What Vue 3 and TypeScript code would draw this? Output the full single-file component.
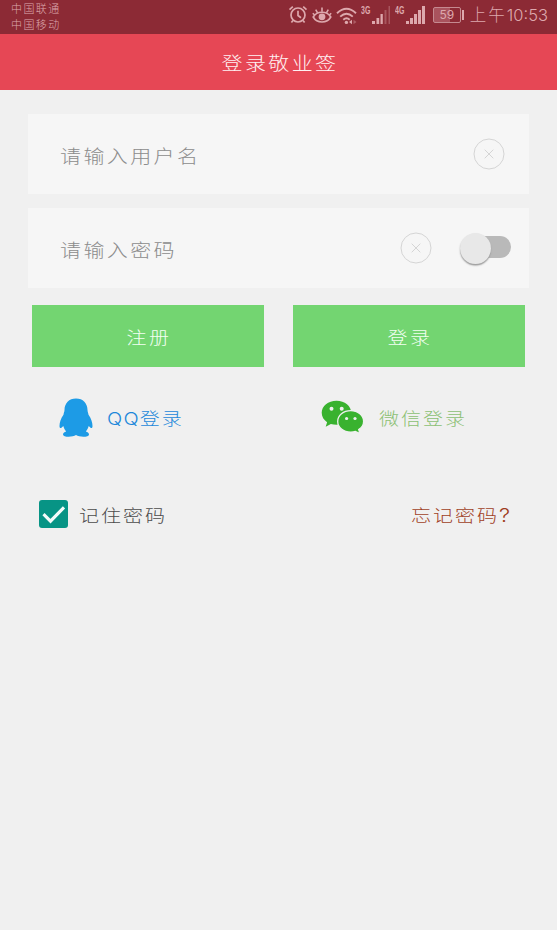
<script setup lang="ts">
import { ref } from 'vue'

const username = ref('')
const password = ref('')
const showPassword = ref(false)
const remember = ref(true)
</script>

<template>
  <div class="screen">
    <div class="status">
      <div class="carriers">
        <span>中国联通</span>
        <span>中国移动</span>
      </div>
      <div class="tray">
        <svg class="alarm" width="20" height="20" viewBox="0 0 20 20" fill="none" stroke="currentColor" stroke-width="1.7">
          <circle cx="10" cy="10" r="7" />
          <path d="M10 5.800v4.700l3 2.200M1.500 4.600 4.800 1.700M18.500 4.600 15.200 1.700M5 15.500l-1.600 2M15 15.500l1.600 2" />
        </svg>
        <svg class="eye" width="20" height="18" viewBox="0 0 20 18" fill="none" stroke="currentColor" stroke-width="1.6">
          <path d="M1.200 11C5 4.600 15 4.600 18.800 11 15 17.700 5 17.700 1.200 11Z" />
          <circle cx="10" cy="10.800" r="3.400" fill="currentColor" stroke="none" />
          <path d="M10 5.800V1.500M5.600 6.800 3.700 3.600M14.400 6.800 16.300 3.600M2.600 9 .8 7.200M17.400 9l1.800-1.800" />
        </svg>
        <svg class="wifi" width="22" height="18" viewBox="0 0 22 18" fill="none" stroke="currentColor" stroke-width="1.9">
          <path d="M1 6.200Q10.500-2.600 20 6.200M4.200 9.600q6.300-5.800 12.600 0M7.300 12.700q3.200-2.700 6.400 0" />
          <circle cx="10.400" cy="15.400" r="1.700" fill="currentColor" stroke="none" />
          <path d="m13 15 3-2.200v4.400z" fill="currentColor" stroke="none" />
          <path d="m20.500 15-3-2.200v4.400z" fill="currentColor" stroke="none" opacity=".4" />
        </svg>
        <span class="net"><b>3G</b></span>
        <svg class="bars" width="20" height="18" viewBox="0 0 20 18" fill="currentColor">
          <path d="M0 15h3v3H0zM4.500 12h2.700v6H4.500zM8.500 8h2.300v10H8.500z" />
          <path d="M12.500 4h2v14h-2zM16.500 0h1.500v18h-1.500z" opacity=".35" />
        </svg>
        <span class="net net-4g"><b>4G</b></span>
        <svg class="bars" width="20" height="18" viewBox="0 0 20 18" fill="currentColor">
          <path d="M0 15h3v3H0zM4 12h3v6H4zM8 8h3v10H8zM12 4h3v14h-3zM16 0h3v18h-3z" />
        </svg>
        <span class="battery"><b>59</b></span>
        <span class="time"><em>上午</em>10:53</span>
      </div>
    </div>

    <header class="title"><h1 class="script">登录敬业签</h1></header>

    <main class="form">
      <div class="field">
        <input v-model="username" class="script" type="text" placeholder="请输入用户名" />
        <button class="clear clear-user" type="button" aria-label="清除" @click="username = ''">
          <svg width="32" height="32" viewBox="0 0 32 32" fill="none" stroke="currentColor">
            <circle cx="16" cy="16" r="15" /><path d="m11.700 11.700 8.600 8.600M20.300 11.700l-8.600 8.600" />
          </svg>
        </button>
      </div>
      <div class="field">
        <input v-model="password" class="script" :type="showPassword ? 'text' : 'password'" placeholder="请输入密码" />
        <button class="clear" type="button" aria-label="清除" @click="password = ''">
          <svg width="32" height="32" viewBox="0 0 32 32" fill="none" stroke="currentColor">
            <circle cx="16" cy="16" r="15" /><path d="m11.700 11.700 8.600 8.600M20.300 11.700l-8.600 8.600" />
          </svg>
        </button>
        <button class="toggle" :class="{ on: showPassword }" type="button" aria-label="显示密码" @click="showPassword = !showPassword">
          <i class="thumb"></i>
        </button>
      </div>

      <div class="actions">
        <button type="button"><span class="script">注册</span></button>
        <button type="button"><span class="script">登录</span></button>
      </div>

      <div class="social">
        <a class="qq">
          <svg width="34" height="39" viewBox="0 0 34 39" fill="#1d9be6">
            <path d="M17 .5C10 .5 5.500 5.300 5.500 12c0 2-.8 2.700-1 4.800C1.800 20.500.500 24.500.500 28c0 2.500 1.200 2.400 2.200 1.400L4.300 28c.6 2.200 1.500 3.900 2.900 5.400-2 .6-3.200 1.700-3.200 3 0 3 9.500 3 13 .6 3.500 2.400 13 2.400 13-.6 0-1.300-1.200-2.400-3.200-3 1.400-1.500 2.300-3.200 2.900-5.400l1.600 1.400c1 1 2.200 1.100 2.200-1.400 0-3.500-1.300-7.500-4-11.200-.2-2.100-1-2.800-1-4.800C28.500 5.300 24 .5 17 .5Z" />
          </svg>
          <span class="script"><em>QQ</em>登录</span>
        </a>
        <a class="wechat">
          <svg width="43" height="34" viewBox="0 0 43 34">
            <path fill="#39b22f" d="M15.500.7C7.200.7.700 6 .7 12.800c0 4 2.100 7.200 5.400 9.400l-1.400 4.500 5.200-2.700c1.800.5 3.600.8 5.600.8 8.300 0 14.800-5.300 14.800-12S23.800.7 15.500.7Z" />
            <path fill="#39b22f" stroke="#f0f0f0" stroke-width="1.300" d="M29.700 10.700c-7.300 0-13 4.700-13 10.700s5.700 10.700 13 10.700c1.700 0 3.200-.2 4.700-.7l4.500 2.200-1.200-4c3-2 4.900-4.900 4.900-8.200 0-6-5.700-10.700-12.900-10.700Z" />
            <g fill="#f0f0f0"><circle cx="10.500" cy="8.700" r="2" /><circle cx="20.700" cy="8.700" r="2" /><circle cx="25.600" cy="18.500" r="1.600" /><circle cx="34" cy="18.500" r="1.600" /></g>
          </svg>
          <span class="script">微信登录</span>
        </a>
      </div>

      <div class="options">
        <label class="remember">
          <input v-model="remember" type="checkbox" />
          <span class="box">
            <svg v-if="remember" width="29" height="28" viewBox="0 0 29 28" fill="none" stroke="#f4fbfa" stroke-width="3.100"><path d="m4.500 14.200 7 7L25 7.300" /></svg>
          </span>
          <span class="script">记住密码</span>
        </label>
        <a class="forgot script">忘记密码<em>?</em></a>
      </div>
    </main>
  </div>
</template>

<style>
body {
  background: #f0f0f0;
}
</style>

<style scoped>
* {
  box-sizing: border-box;
}
.screen {
  width: 557px;
  height: 930px;
  overflow: hidden;
  background: #f0f0f0;
  font-family: "Noto Sans", "Noto Sans CJK SC", sans-serif;
  font-weight: 300;
}
button {
  padding: 0;
  border: 0;
  background: none;
  font: inherit;
  cursor: pointer;
}
em {
  font-style: normal;
}
svg {
  display: block;
  flex: none;
}
/* Wide, flattened letterforms */
.script {
  display: inline-block;
  font-family: Inter, "Noto Sans CJK SC", sans-serif;
  font-weight: 300;
  font-size: 21px;
  line-height: 30px;
  letter-spacing: 2.400px;
  white-space: nowrap;
  transform: scaleY(0.86);
}
.status {
  display: flex;
  justify-content: space-between;
  height: 34px;
  padding: 0 9px 0 11px;
  background: #8c2a35;
  color: #dda8ad;
}
.carriers {
  display: flex;
  flex-direction: column;
  font-family: "Noto Sans CJK SC", sans-serif;
  font-size: 11px;
  line-height: 16px;
  letter-spacing: 1.4px;
}
.tray {
  display: flex;
  align-items: flex-start;
  padding-top: 6px;
}
.alarm {
  margin: -1px 4px 0 0;
}
.eye {
  margin-right: 4px;
}
.wifi {
  margin: 1px 4px 0 0;
}
.net {
  width: 10px;
  font: 10px/10px "Liberation Sans", sans-serif;
}
.net b {
  display: block;
  width: 14px;
  margin-left: -1px;
  transform: scaleX(0.7);
  transform-origin: left;
}
.net-4g {
  margin-left: 4px;
}
.battery {
  display: flex;
  justify-content: center;
  position: relative;
  width: 28px;
  height: 16px;
  margin: 1px 0 0 7px;
  border: 1px solid #c58a90;
  border-radius: 2px;
  background: linear-gradient(90deg, #a9535d 60%, transparent 60%);
  font: 12px/14px Inter, sans-serif;
}
.battery b {
  font-weight: 400;
}
.battery::after {
  content: "";
  position: absolute;
  right: -4px;
  top: 2px;
  width: 2px;
  height: 10px;
  background: #dda8ad;
}
.time {
  margin-left: 9px;
  font-family: Inter, "Noto Sans CJK SC", sans-serif;
  font-size: 16.500px;
  line-height: 19px;
  white-space: nowrap;
}
.time em {
  letter-spacing: 2px;
}
.title {
  display: flex;
  align-items: center;
  justify-content: center;
  height: 56px;
  padding: 3px 0 0 3px;
  background: #e64755;
  color: #fff1f2;
}
.title h1 {
  margin: 0;
}
.form {
  display: flex;
  flex-direction: column;
  gap: 14px;
  padding: 24px 28px 0;
}
.field {
  display: flex;
  align-items: center;
  height: 80px;
  padding: 0 18px 0 32px;
  background: #f6f6f6;
}
.field input {
  flex: 1;
  min-width: 0;
  height: 40px;
  margin-top: 3px;
  padding: 0;
  border: 0;
  outline: 0;
  background: none;
  color: #777;
}
.field input::placeholder {
  color: #8c8c8c;
  opacity: 1;
}
.clear {
  color: #d5d5d5;
}
.clear-user {
  margin-right: 6px;
}
.toggle {
  display: flex;
  align-items: center;
  width: 46px;
  height: 22px;
  margin: 0 0 2px 33px;
  padding-right: 3px;
  border-radius: 11px;
  background: linear-gradient(90deg, transparent 12px, #b9b9b9 12px);
}
.toggle.on {
  justify-content: flex-end;
  background: #80cbc4;
}
.thumb {
  flex: none;
  width: 31px;
  height: 31px;
  margin: 2px 0 0 -5px;
  border-radius: 50%;
  background: #e8e8e8;
  box-shadow: 0 1.500px 1.500px #999;
}
.actions {
  display: grid;
  grid-template-columns: 232px 232px;
  justify-content: space-between;
  height: 62px;
  margin: 3px 4px 0;
}
.actions button {
  padding: 4px 0 0 2px;
  background: #73d571;
  color: #f2fff1;
}
.actions .script {
  font-size: 20px;
}
.social {
  display: flex;
  align-items: center;
  height: 40px;
  margin-top: 16px;
}
.social a {
  display: flex;
  align-items: center;
}
.social .script,
.options .script {
  font-size: 20px;
  letter-spacing: 2px;
}
.qq {
  width: 262px;
  padding-left: 31px;
  gap: 14px;
  color: #1d88da;
}
.social .qq em {
  letter-spacing: 1.200px;
}
.wechat {
  padding-left: 31px;
  gap: 15px;
  color: #8cc074;
}
.social .script {
  margin-top: 3px;
}
.options {
  display: flex;
  align-items: center;
  justify-content: space-between;
  margin-top: 46px;
  padding: 0 19px 0 11px;
}
.remember {
  display: flex;
  align-items: center;
  gap: 11px;
  color: #4c4c4c;
}
.remember input {
  position: absolute;
  opacity: 0;
}
.box {
  width: 29px;
  height: 28px;
  border-radius: 3px;
  background: #079485;
}
.options .script {
  margin-top: 3px;
}
.forgot {
  color: #a0401f;
}
.forgot em {
  display: inline-block;
  font-size: 22px;
  letter-spacing: 0;
}
</style>
